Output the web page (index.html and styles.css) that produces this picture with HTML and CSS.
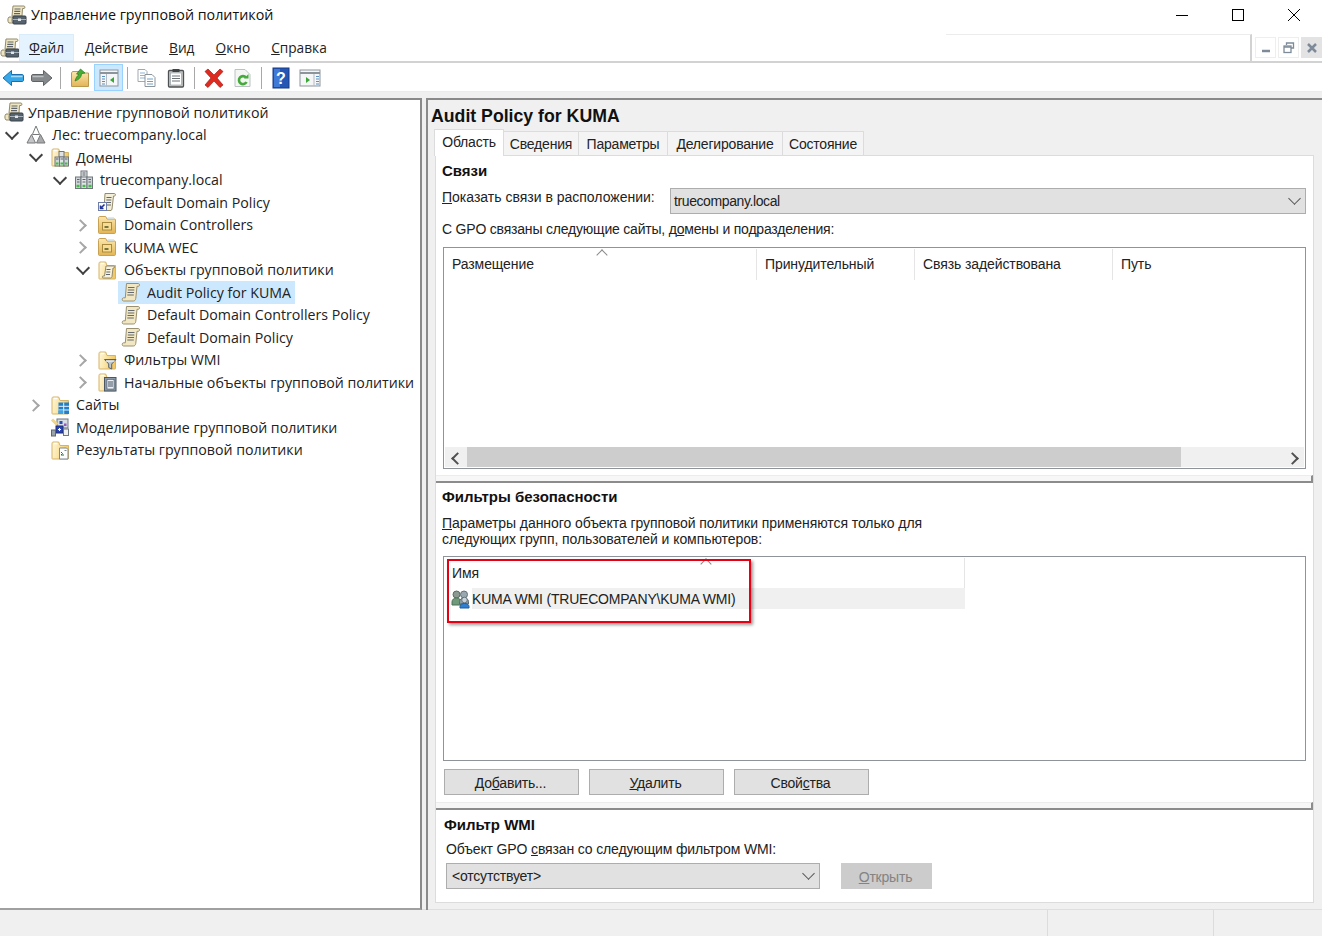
FILE: index.html
```html
<!DOCTYPE html>
<html lang="ru">
<head>
  <meta charset="utf-8">
  <title>Управление групповой политикой</title>
  <link rel="stylesheet" href="styles.css">
</head>
<body>
  <svg class="sprite" width="0" height="0">
    <defs>
      <linearGradient id="g-folder" x1="0" y1="0" x2="1" y2="0.2">
        <stop offset="0" stop-color="#fff7dc"/>
        <stop offset="0.45" stop-color="#fbe6a8"/>
        <stop offset="1" stop-color="#f2c964"/>
      </linearGradient>
      <linearGradient id="g-closed" x1="0" y1="0" x2="0" y2="1">
        <stop offset="0" stop-color="#fbe7ae"/>
        <stop offset="1" stop-color="#e3b455"/>
      </linearGradient>
      <symbol id="i-scroll" viewBox="0 0 20 20">
        <path d="M5.500 1.500h12c1.300 0 1.300 2.800 0 2.800H16l-1.200 12c-.2 1.600-1 2.700-2.500 2.700H2.500c-1.700 0-1.700-3.200 0-3.200h1.800z" fill="#f1e7c3" stroke="#9a9070"/>
        <path d="M7 5.500h6.500M6.800 8h6.500M6.500 10.500h6.500M6.300 13h6.500" stroke="#666a6c" stroke-width="1.200"/>
      </symbol>
      <symbol id="i-gpmc" viewBox="0 0 20 20">
        <path d="M6 1h11c1.200 0 1.200 2.500 0 2.500h-1.500L15 11H5z" fill="#efe6c4" stroke="#938a6c"/>
        <path d="M7.500 4h6M7.300 6.300h6M7 8.600h6" stroke="#5f6468" stroke-width="1.200"/>
        <path d="M2 12h4c-1.500 1-1.500 5 0 6H2c-1.500-1-1.500-5 0-6z" fill="#efe6c4" stroke="#938a6c"/>
        <rect x="6" y="11" width="13" height="8" rx="1" fill="#56626d" stroke="#3a434b"/>
        <path d="M6 14.500h13" stroke="#a9b3bb"/>
        <rect x="11" y="13.500" width="3" height="2.500" fill="#dfe5ea"/>
      </symbol>
      <symbol id="i-forest" viewBox="0 0 20 20">
        <path d="M10 1l3.600 8.500H6.400z" fill="#fff" stroke="#77797b"/>
        <path d="M5.500 9.500l4 8.500H1z" fill="#c4c6c8" stroke="#77797b"/>
        <path d="M14.500 9.500l4.500 8.500h-8.500z" fill="#a8aaac" stroke="#77797b"/>
      </symbol>
      <symbol id="i-folder" viewBox="0 0 20 20">
        <path d="M2 4v14.500c0 .3.200.5.500.5h15.500c.300 0 .5-.2.500-.5V5.500H10L8.700 2H3C2.400 2 2 2.800 2 4z" fill="url(#g-folder)" stroke="#d5b367"/>
        <path d="M4 3.500h3.500" stroke="#fff" stroke-width="1.500"/>
      </symbol>
      <symbol id="i-ou" viewBox="0 0 20 20">
        <path d="M1.500 3.500v14c0 .5.300 1 1 1h15c.6 0 1-.5 1-1V5c0-.6-.4-1-1-1H10L8.700 1.500H2.500c-.6 0-1 .8-1 2z" fill="url(#g-closed)" stroke="#c9a153"/>
        <path d="M10.500 3h6.500" stroke="#cfe3f2" stroke-width="1.500"/>
        <rect x="5.500" y="7.500" width="9" height="7.500" fill="#f6dc94" stroke="#a98a3c"/>
        <path d="M7.500 12h4" stroke="#5c5a20" stroke-width="1.600"/>
      </symbol>
      <symbol id="i-tower" viewBox="0 0 20 20">
        <rect x="7" y="1" width="6" height="6.500" fill="#dfe3e6" stroke="#6f777d"/>
        <rect x="1.500" y="7" width="5.500" height="11.500" fill="#cfd4d8" stroke="#6f777d"/>
        <rect x="7" y="7" width="6" height="11.500" fill="#e3e6e9" stroke="#6f777d"/>
        <rect x="13" y="7" width="5.500" height="11.500" fill="#cfd4d8" stroke="#6f777d"/>
        <path d="M8.500 3h3M8.500 5h3M3 9.500h2.500M8.500 9.500h3M14.500 9.500h2.500M3 12h2.500M8.500 12h3M14.500 12h2.500" stroke="#5d656b"/>
        <path d="M2.500 16h3M8.500 16h3M14.500 16h3" stroke="#3fbe3f" stroke-width="2.400"/>
      </symbol>
      <symbol id="i-domains" viewBox="0 0 20 20">
        <use href="#i-folder"/>
        <rect x="9" y="4.500" width="5" height="5.500" fill="#dfe3e6" stroke="#6f777d"/>
        <rect x="5" y="10" width="4.500" height="9" fill="#cfd4d8" stroke="#6f777d"/>
        <rect x="9.500" y="10" width="4.500" height="9" fill="#e3e6e9" stroke="#6f777d"/>
        <rect x="14" y="10" width="4.500" height="9" fill="#cfd4d8" stroke="#6f777d"/>
        <path d="M6 12h2.500M10.500 12h2.500M15 12h2.500" stroke="#5d656b"/>
        <path d="M6 16.500h2.500M10.500 16.500h2.500M15 16.500h2.500" stroke="#3fbe3f" stroke-width="2.200"/>
      </symbol>
      <symbol id="i-link" viewBox="0 0 20 20">
        <path d="M8 1.500h9.500c1.200 0 1.200 2.500 0 2.500H16.500l-1.500 13c-.1.700-.5 1.500-1 1.500H7z" fill="#f4efd9" stroke="#938a6c"/>
        <path d="M9.500 5.500h5M9.300 8h5M9 10.500h5M9 13h5" stroke="#5f6468" stroke-width="1.200"/>
        <rect x="1.500" y="10.500" width="8" height="8" fill="#fff" stroke="#6f7ea8"/>
        <path d="M7.500 12.500L3.500 16.500M3.500 13.500v3h3" stroke="#22349a" stroke-width="1.600" fill="none"/>
      </symbol>
      <symbol id="i-gpos" viewBox="0 0 20 20">
        <use href="#i-folder"/>
        <path d="M9 6h8c.8 0 .8 2 0 2h-1l-1 8.500c-.1.800-.6 1.500-1.500 1.500H6c-.9 0-.9-2 0-2h1.500z" fill="#f7f2de" stroke="#938a6c"/>
        <path d="M9.500 9.500h4M9.300 12h4M9 14.500h4" stroke="#5f6468"/>
      </symbol>
      <symbol id="i-filter" viewBox="0 0 20 20">
        <use href="#i-folder"/>
        <path d="M7.500 9.500h11.500L14.700 14v5l-3-1.500V14z" fill="#bfc6cc" stroke="#59636c"/>
        <path d="M9 11.200h8.500" stroke="#f2f4f5"/>
      </symbol>
      <symbol id="i-starter" viewBox="0 0 20 20">
        <use href="#i-folder"/>
        <rect x="7.500" y="5.500" width="11.500" height="13.500" fill="#8b99a8" stroke="#4b5763"/>
        <rect x="10" y="7.500" width="7" height="9.500" fill="#eef1f4" stroke="#4b5763" stroke-width=".6"/>
        <path d="M11 10h5M11 12h5M11 14h5" stroke="#3d4d5c"/>
      </symbol>
      <symbol id="i-sites" viewBox="0 0 20 20">
        <use href="#i-folder"/>
        <rect x="8.500" y="7.500" width="10.500" height="11.500" fill="#1f7fc9"/>
        <path d="M8.500 11.300h10.500M8.500 15h10.500M13.700 7.500V19" stroke="#e8f3fb"/>
        <rect x="8.500" y="15.500" width="4.700" height="3.500" fill="#3aa4e6"/>
      </symbol>
      <symbol id="i-model" viewBox="0 0 20 20">
        <rect x="7" y="2" width="11" height="9" fill="#d7dde3" stroke="#6e7880"/>
        <rect x="9.500" y="4" width="3" height="3" fill="#2b4fb0"/>
        <rect x="14" y="6.500" width="2.500" height="2.500" fill="#8f5bb5"/>
        <rect x="6" y="9" width="7" height="7" fill="#2a45b0" stroke="#1d2d78"/>
        <path d="M8 12.500h3M9.500 11v3" stroke="#fff"/>
        <rect x="1.500" y="13" width="4" height="6" fill="#9aa3aa" stroke="#5f676d"/>
        <path d="M2 2.500l5 5" stroke="#f0d48a" stroke-width="3"/>
        <rect x="13.500" y="12" width="5" height="6.500" fill="#eef0f2" stroke="#6e7880"/>
      </symbol>
      <symbol id="i-results" viewBox="0 0 20 20">
        <use href="#i-folder"/>
        <path d="M9.500 8h7l1.500 1.500V19H9.500z" fill="#fdfdfd" stroke="#7f8890"/>
        <path d="M11 12l1.500 1.500L11 15h3" stroke="#27753a" fill="none"/>
        <path d="M14.500 10.500h2" stroke="#7f8890"/>
      </symbol>
      <symbol id="i-group" viewBox="0 0 20 20">
        <circle cx="5.500" cy="5.500" r="3.500" fill="#8a9a90" stroke="#5c6a62"/>
        <path d="M1 16v-3c0-2.500 2-4 4.500-4S10 10.500 10 13v3z" fill="#6f9a7a" stroke="#4d6f56"/>
        <circle cx="13" cy="5.500" r="3.500" fill="#9ba7ae" stroke="#64727a"/>
        <path d="M8.500 15v-2.500C8.500 10.500 10.500 9 13 9s4.500 1.500 4.500 3.500V15z" fill="#8b9ca6" stroke="#5b6b74"/>
        <circle cx="13.500" cy="11" r="2.800" fill="#c9d2d8" stroke="#66757e"/>
        <path d="M9 19v-1.500c0-1.800 2-3 4.500-3s4.500 1.200 4.500 3V19z" fill="#2f7fd1" stroke="#1f5c9e"/>
      </symbol>
    </defs>
  </svg>

  <header class="titlebar">
    <svg class="title-icon"><use href="#i-gpmc"/></svg>
    <span class="title-text">Управление групповой политикой</span>
    <div class="win-buttons">
      <button class="win-btn"><svg width="14" height="14" viewBox="0 0 14 14"><path d="M1 7.500h12" stroke="#000"/></svg></button>
      <button class="win-btn"><svg width="14" height="14" viewBox="0 0 14 14"><rect x="1.500" y="1.500" width="11" height="11" fill="none" stroke="#000"/></svg></button>
      <button class="win-btn"><svg width="14" height="14" viewBox="0 0 14 14"><path d="M1 1l12 12M13 1L1 13" stroke="#000"/></svg></button>
    </div>
  </header>

  <nav class="menubar">
    <svg class="menu-icon"><use href="#i-gpmc"/></svg>
    <span class="menu-item active"><u>Ф</u>айл</span>
    <span class="menu-item"><u>Д</u>ействие</span>
    <span class="menu-item"><u>В</u>ид</span>
    <span class="menu-item"><u>О</u>кно</span>
    <span class="menu-item"><u>С</u>правка</span>
    <div class="mdi-strip"></div>
    <div class="mdi-buttons">
      <span class="mdi-btn"><svg width="12" height="12" viewBox="0 0 12 12"><path d="M2 9h8" stroke="#7d8a99" stroke-width="2.500"/></svg></span>
      <span class="mdi-btn"><svg width="12" height="12" viewBox="0 0 12 12"><path d="M3.500 3V1h7v5H8" fill="none" stroke="#7d8a99" stroke-width="1.300"/><rect x="1" y="4" width="7" height="6.500" fill="none" stroke="#7d8a99" stroke-width="1.300"/><path d="M1 5h7" stroke="#7d8a99" stroke-width="1.500"/></svg></span>
      <span class="mdi-btn closing"><svg width="12" height="12" viewBox="0 0 12 12"><path d="M2 2l8 8M10 2l-8 8" stroke="#7d8a99" stroke-width="2.500"/></svg></span>
    </div>
  </nav>

  <div class="toolbar">
    <span class="tool"><svg width="22" height="20" viewBox="0 0 22 20"><path d="M1 10l8.500-7.500V6.500h10.500c1 0 1.500.5 1.500 1.500v4c0 1-.5 1.500-1.500 1.500H9.500v4z" fill="#37a7e8" stroke="#1c6fae"/><path d="M9 8.500h11.500" stroke="#a5dcf7" stroke-width="1.500"/></svg></span>
    <span class="tool"><svg width="22" height="20" viewBox="0 0 22 20"><path d="M21 10l-8.500-7.500V6.500H2c-1 0-1.500.5-1.500 1.500v4c0 1 .5 1.500 1.500 1.500h10.500v4z" fill="#85898c" stroke="#5f6366"/><path d="M1.500 8.500h11" stroke="#bcc0c2" stroke-width="1.500"/></svg></span>
    <span class="tool-sep"></span>
    <span class="tool"><svg width="20" height="20" viewBox="0 0 20 20"><path d="M1.500 5v13.500h17V5H10L9 3.500H2.500z" fill="url(#g-closed)" stroke="#b99a4c"/><path d="M5 13c1-3.500 2-5 4-6.500L6.500 6 10.500 1 15 5l-3.200 0.500c-.5 3-2 6-6.800 7.500z" fill="#45ad33" stroke="#2a7d22" stroke-width=".7"/></svg></span>
    <span class="tool selected"><svg width="20" height="20" viewBox="0 0 20 20"><rect x="1" y="2" width="18" height="16" fill="#f4f6f8" stroke="#8d959c"/><path d="M1 5h18" stroke="#8d959c" stroke-width="2"/><path d="M7.500 6v12" stroke="#b5bcc2"/><path d="M3 8.500h3M3 11h3M3 13.500h3M3 16h3" stroke="#5a8fc0"/><path d="M15 9v6l-4-3z" fill="#3aa636"/></svg></span>
    <span class="tool-sep"></span>
    <span class="tool"><svg width="21" height="20" viewBox="0 0 21 20"><path d="M2 1.500h7l2 2v10H2z" fill="#fff" stroke="#a3a9ae"/><path d="M4 5h5M4 7.500h5M4 10h5" stroke="#8fb5d6"/><path d="M9 6.500h7l3 3v9H9z" fill="#fff" stroke="#8d959c"/><path d="M11 11h6M11 13.500h6M11 16h6" stroke="#6ea0c9"/></svg></span>
    <span class="tool"><svg width="18" height="20" viewBox="0 0 18 20"><rect x="1.500" y="2.500" width="15" height="16.500" rx="1" fill="#c9cac7" stroke="#4e5153" stroke-width="1.300"/><rect x="3.500" y="5" width="11" height="12" fill="#fff" stroke="#8d959c" stroke-width=".6"/><rect x="5.500" y="1" width="7" height="3" fill="#3f4447"/><path d="M5 8h8M5 10.500h8M5 13h8" stroke="#6d7276"/></svg></span>
    <span class="tool-sep"></span>
    <span class="tool"><svg width="22" height="20" viewBox="0 0 22 20"><path d="M2 3.500L5 1l6 6 6-6 3 2.500L14 10l6 7-3 2.500-6-6.500-6 6.500L2 17l6-7z" fill="#df2a20" stroke="#a81b14" stroke-width=".7"/></svg></span>
    <span class="tool"><svg width="19" height="20" viewBox="0 0 19 20"><path d="M2 1.500h10l5 5v12H2z" fill="#f3f6f3" stroke="#bcc2c4"/><path d="M13 9.500A4 4 0 1 0 13.500 14" fill="none" stroke="#44aa3a" stroke-width="2.600"/><path d="M11 10.500h4.500V6z" fill="#44aa3a"/></svg></span>
    <span class="tool-sep"></span>
    <span class="tool"><svg width="18" height="22" viewBox="0 0 18 22"><rect x="1" y="1" width="16" height="20" fill="#2456b5" stroke="#163a85"/><rect x="2" y="2" width="6" height="18" fill="#3f7ad6"/><text x="9" y="16.500" class="help-mark">?</text></svg></span>
    <span class="tool"><svg width="22" height="20" viewBox="0 0 22 20"><rect x="1" y="2" width="20" height="16" fill="#f4f6f8" stroke="#8d959c"/><path d="M1 5h20" stroke="#8d959c" stroke-width="2"/><path d="M15 6v12" stroke="#b5bcc2"/><path d="M17 8.500h3M17 11h3M17 13.500h3M17 16h3" stroke="#5a8fc0"/><path d="M7 9v6l4-3z" fill="#3aa636"/></svg></span>
  </div>
  <div class="toolbar-strip"></div>

  <main class="workspace">
    <aside class="tree">
      <div class="row lvl0"><span class="node"><svg class="tree-icon root-icon"><use href="#i-gpmc"/></svg>Управление групповой политикой</span></div>
      <div class="row lvl1"><span class="chev open"></span><span class="node"><svg class="tree-icon"><use href="#i-forest"/></svg>Лес: truecompany.local</span></div>
      <div class="row lvl2"><span class="chev open"></span><span class="node"><svg class="tree-icon"><use href="#i-domains"/></svg>Домены</span></div>
      <div class="row lvl3"><span class="chev open"></span><span class="node"><svg class="tree-icon"><use href="#i-tower"/></svg>truecompany.local</span></div>
      <div class="row lvl4"><span class="chev none"></span><span class="node"><svg class="tree-icon"><use href="#i-link"/></svg>Default Domain Policy</span></div>
      <div class="row lvl4"><span class="chev"></span><span class="node"><svg class="tree-icon"><use href="#i-ou"/></svg>Domain Controllers</span></div>
      <div class="row lvl4"><span class="chev"></span><span class="node"><svg class="tree-icon"><use href="#i-ou"/></svg>KUMA WEC</span></div>
      <div class="row lvl4"><span class="chev open"></span><span class="node"><svg class="tree-icon"><use href="#i-gpos"/></svg>Объекты групповой политики</span></div>
      <div class="row lvl5"><span class="chev none"></span><span class="node current"><svg class="tree-icon"><use href="#i-scroll"/></svg>Audit Policy for KUMA</span></div>
      <div class="row lvl5"><span class="chev none"></span><span class="node"><svg class="tree-icon"><use href="#i-scroll"/></svg>Default Domain Controllers Policy</span></div>
      <div class="row lvl5"><span class="chev none"></span><span class="node"><svg class="tree-icon"><use href="#i-scroll"/></svg>Default Domain Policy</span></div>
      <div class="row lvl4"><span class="chev"></span><span class="node"><svg class="tree-icon"><use href="#i-filter"/></svg>Фильтры WMI</span></div>
      <div class="row lvl4"><span class="chev"></span><span class="node"><svg class="tree-icon"><use href="#i-starter"/></svg>Начальные объекты групповой политики</span></div>
      <div class="row lvl2"><span class="chev"></span><span class="node"><svg class="tree-icon"><use href="#i-sites"/></svg>Сайты</span></div>
      <div class="row lvl2"><span class="chev none"></span><span class="node"><svg class="tree-icon"><use href="#i-model"/></svg>Моделирование групповой политики</span></div>
      <div class="row lvl2"><span class="chev none"></span><span class="node"><svg class="tree-icon"><use href="#i-results"/></svg>Результаты групповой политики</span></div>
    </aside>

    <section class="details">
      <h1 class="gpo-name">Audit Policy for KUMA</h1>
      <div class="tabs">
        <span class="tab tab-active">Область</span>
        <span class="tab tab-info">Сведения</span>
        <span class="tab tab-params">Параметры</span>
        <span class="tab tab-deleg">Делегирование</span>
        <span class="tab tab-state">Состояние</span>
      </div>

      <div class="panel">
        <div class="block links">
          <h2 class="block-title">Связи</h2>
          <div class="location">
            <label class="location-label"><u>П</u>оказать связи в расположении:</label>
            <div class="combo combo-wide"><span class="combo-text">truecompany.local</span><span class="combo-arrow"></span></div>
          </div>
          <p class="caption">С GPO связаны следующие сайты, д<u>о</u>мены и подразделения:</p>
          <div class="listview links-list">
            <div class="list-head">
              <span class="col col-place">Размещение<span class="sort-caret"></span></span>
              <span class="col col-force">Принудительный</span>
              <span class="col col-enabled">Связь задействована</span>
              <span class="col col-path">Путь</span>
            </div>
            <div class="list-body"></div>
            <div class="hscroll">
              <span class="scroll-arrow left"></span>
              <span class="scroll-thumb"></span>
              <span class="scroll-arrow right"></span>
            </div>
          </div>
        </div>

        <div class="splitter"></div>

        <div class="block filters">
          <h2 class="block-title">Фильтры безопасности</h2>
          <p class="filters-note"><u>П</u>араметры данного объекта групповой политики применяются только для<br>следующих групп, пользователей и компьютеров:</p>
          <div class="listview filters-list">
            <div class="list-head short">
              <span class="col col-name">Имя<span class="sort-caret second"></span></span>
            </div>
            <div class="filter-row">
              <svg class="group-icon"><use href="#i-group"/></svg>
              <span class="filter-cell">KUMA WMI (TRUECOMPANY\KUMA WMI)</span>
            </div>
            <div class="callout"></div>
          </div>
          <div class="filter-buttons">
            <button class="btn">До<u>б</u>авить...</button>
            <button class="btn"><u>У</u>далить</button>
            <button class="btn">Свой<u>с</u>тва</button>
          </div>
        </div>

        <div class="splitter second-split"></div>

        <div class="block wmi">
          <h2 class="block-title">Фильтр WMI</h2>
          <p class="wmi-note">Объект GPO <u>с</u>вязан со следующим фильтром WMI:</p>
          <div class="wmi-row">
            <div class="combo combo-wmi"><span class="combo-text-wmi">&lt;отсутствует&gt;</span><span class="combo-arrow"></span></div>
            <button class="btn btn-off"><u>О</u>ткрыть</button>
          </div>
        </div>
      </div>
    </section>
  </main>

  <footer class="statusbar">
    <span class="status-cell status-main"></span>
    <span class="status-cell status-mid"></span>
    <span class="status-cell status-end"></span>
  </footer>
</body>
</html>
```
FILE: styles.css
```css
* {
  box-sizing: border-box;
}

html, body {
  margin: 0;
  height: 936px;
  overflow: hidden;
}

body {
  background-color: #fff;
  color: #222;
  font-family: "Open Sans", "Noto Sans", sans-serif;
  font-size: 14px;
}

.sprite {
  position: absolute;
}

/* Заголовок окна */
.titlebar {
  height: 30px;
  display: flex;
  align-items: center;
  padding-left: 7px;
}

.title-icon {
  width: 20px;
  height: 20px;
}

.title-text {
  margin-left: 4px;
  margin-top: -2px;
  font-size: 14.3px;
  color: #111;
}

.win-buttons {
  margin-left: auto;
  display: flex;
}

.win-btn {
  width: 56px;
  height: 30px;
  padding: 0;
  border: none;
  background: none;
  display: flex;
  align-items: center;
  justify-content: center;
}

/* Меню */
.menubar {
  margin-top: 4px;
  height: 29px;
  display: flex;
  align-items: stretch;
  border-bottom: 2px solid #d2d2d2;
}

.menu-icon {
  width: 20px;
  height: 20px;
  margin: 4px 0 0 0;
  flex: none;
}

.menu-item {
  display: flex;
  align-items: center;
  padding: 0 9px;
  font-size: 13.7px;
  height: 27px;
  margin-right: 1px;
  border: 1px solid transparent;
}

.menu-item.active {
  margin-left: -1px;
  background-color: #e5f3ff;
  border-color: #d8ecfc;
}

.mdi-strip {
  margin-left: auto;
  width: 306px;
  border-top: 1px solid #ececec;
  border-right: 2px solid #d2d2d2;
}

.mdi-buttons {
  display: flex;
  gap: 2px;
  padding: 3px 0 0 3px;
}

.mdi-btn {
  width: 21px;
  height: 21px;
  border: 1px solid #eee;
  display: flex;
  align-items: center;
  justify-content: center;
}

.mdi-btn.closing {
  background-color: #e3e3e3;
  border-color: #e3e3e3;
}

/* Панель инструментов */
.toolbar {
  height: 28px;
  margin-left: -2px;
  padding-top: 1px;
  display: flex;
  align-items: center;
}

.tool {
  width: 29px;
  height: 27px;
  display: flex;
  align-items: center;
  justify-content: center;
  border: 1px solid transparent;
}

.tool.selected {
  background-color: #cce8ff;
  border-color: #99d1ff;
}

.tool-sep {
  width: 9px;
  height: 22px;
  background: linear-gradient(#a8a8a8, #a8a8a8) center / 1px 100% no-repeat;
}

.help-mark {
  font-family: "Liberation Sans", sans-serif;
  font-weight: bold;
  font-size: 16px;
  fill: #fff;
  text-anchor: middle;
}

.toolbar-strip {
  height: 7px;
  background-color: #f0f0f0;
  border-top: 1px solid #ececec;
}

/* Основная область */
.workspace {
  height: 812px;
  display: flex;
  background-color: #f0f0f0;
}

.tree {
  width: 422px;
  flex: none;
  padding-top: 1px;
  background-color: #fff;
  border-top: 2px solid #8a8a8a;
  border-right: 2px solid #8a8a8a;
  border-bottom: 2px solid #a0a0a0;
  font-size: 14.2px;
}

.row {
  height: 22.5px;
  display: flex;
  align-items: center;
  white-space: nowrap;
}

.lvl0 { padding-left: 4px; }
.lvl1 { padding-left: 4px; }
.lvl2 { padding-left: 28px; }
.lvl3 { padding-left: 52px; }
.lvl4 { padding-left: 75px; }
.lvl5 { padding-left: 99px; }

.chev {
  width: 20px;
  height: 20px;
  flex: none;
  margin-right: 2px;
  position: relative;
}

.chev::before {
  content: "";
  position: absolute;
  left: 1px;
  top: 6px;
  width: 7px;
  height: 7px;
  border-right: 2px solid #a6a6a6;
  border-top: 2px solid #a6a6a6;
  transform: rotate(45deg);
}

.chev.open::before {
  left: 3px;
  top: 3px;
  width: 8px;
  height: 8px;
  border-color: #404040;
  transform: rotate(135deg);
}

.chev.none::before {
  display: none;
}

.node {
  display: flex;
  align-items: center;
  height: 22.5px;
  padding-right: 4px;
}

.node.current {
  background-color: #cce8ff;
  margin-left: -3px;
  padding-left: 3px;
}

.tree-icon {
  width: 20px;
  height: 20px;
  margin-right: 6px;
  flex: none;
}

.tree-icon.root-icon {
  margin-right: 4px;
}

.lvl4 .tree-icon {
  margin-right: 7px;
}

/* Правая панель */
.details {
  margin-left: 4px;
  flex: 1;
  min-width: 0;
  border-top: 2px solid #8a8a8a;
  border-left: 2px solid #8a8a8a;
  font-family: "Liberation Sans", sans-serif;
  font-size: 14px;
  letter-spacing: -0.2px;
}

.gpo-name {
  margin: 0;
  height: 28px;
  padding-left: 3px;
  font-size: 17.7px;
  line-height: 32px;
  letter-spacing: 0;
  color: #111;
}

.tabs {
  display: flex;
  height: 27px;
  padding-left: 6px;
  align-items: flex-end;
}

.tab {
  height: 24px;
  display: flex;
  align-items: center;
  justify-content: center;
  background-color: #f4f4f4;
  border: 1px solid #dcdcdc;
  border-left: none;
  border-bottom: none;
}

.tab-active {
  height: 27px;
  width: 70px;
  padding-bottom: 2px;
  background-color: #fff;
  border-left: 1px solid #dcdcdc;
  position: relative;
  top: 1px;
}

.tab-info { width: 75px; }
.tab-params { width: 89px; }
.tab-deleg { width: 115px; }
.tab-state { width: 81px; }

.panel {
  margin: 0 8px 0 7px;
  height: 748px;
  background-color: #fff;
  border: 1px solid #dcdcdc;
}

.block {
  padding-left: 6px;
}

.block-title {
  margin: 0;
  font-size: 15px;
  line-height: 18px;
  letter-spacing: 0;
  color: #111;
}

.links {
  padding-top: 6px;
}

.location {
  margin-top: 8px;
  display: flex;
  align-items: flex-start;
  height: 26px;
}

.location-label {
  width: 228px;
  line-height: 18px;
  letter-spacing: 0;
}

.combo {
  height: 26px;
  display: flex;
  align-items: center;
  padding-left: 3px;
  background-color: #e1e1e1;
  border: 1px solid #adadad;
  position: relative;
}

.combo-text {
  letter-spacing: -0.4px;
}

.combo-text-wmi {
  margin-left: 2px;
}

.combo-wide {
  width: 636px;
}

.combo-wmi {
  width: 374px;
}

.combo-arrow {
  position: absolute;
  right: 6px;
  top: 5px;
  width: 9px;
  height: 9px;
  border-right: 1.500px solid #555;
  border-bottom: 1.500px solid #555;
  transform: rotate(45deg);
}

.caption {
  margin: 6px 0 0;
  line-height: 18px;
}

.listview {
  margin-left: 1px;
  width: 863px;
  background-color: #fff;
  border: 1px solid #8f949a;
  position: relative;
}

.links-list {
  margin-top: 9px;
  height: 222px;
  display: flex;
  flex-direction: column;
}

.list-head {
  height: 32px;
  display: flex;
  flex: none;
}

.list-head.short {
  height: 31px;
}

.col {
  display: flex;
  align-items: center;
  padding: 0 0 1px 8px;
  margin-top: 1px;
  letter-spacing: -0.1px;
  border-right: 1px solid #e5e5e5;
  position: relative;
}

.col-place { width: 313px; }
.col-force { width: 158px; }
.col-enabled { width: 198px; }
.col-path { border-right: none; }
.col-name { width: 521px; }

.sort-caret {
  position: absolute;
  left: 154px;
  top: 2px;
  width: 8px;
  height: 8px;
  border-left: 1.500px solid #8a8a8a;
  border-top: 1.500px solid #8a8a8a;
  transform: rotate(45deg);
}

.sort-caret.second {
  left: 258px;
}

.list-body {
  flex: 1;
}

.hscroll {
  height: 20px;
  margin: 0 1px 1px;
  display: flex;
  align-items: stretch;
  background-color: #f0f0f0;
}

.scroll-arrow {
  width: 22px;
  flex: none;
  position: relative;
}

.scroll-arrow::before {
  content: "";
  position: absolute;
  top: 7px;
  left: 8px;
  width: 7px;
  height: 7px;
  border-left: 2px solid #505050;
  border-top: 2px solid #505050;
  transform: rotate(-45deg);
}

.scroll-arrow.right {
  margin-left: auto;
}

.scroll-arrow.right::before {
  transform: rotate(135deg);
  left: 6px;
}

.scroll-thumb {
  width: 714px;
  background-color: #cdcdcd;
}

.splitter {
  margin-top: 6px;
  height: 8px;
  background-color: #f7f7f7;
  border-top: 1px solid #ececec;
  border-bottom: 2px solid #8c8c8c;
  border-right: 2px solid #8c8c8c;
}

.second-split {
  margin-top: 7px;
}

.filters {
  padding-top: 5px;
}

.filters-note {
  margin: 9px 0 0;
  line-height: 16px;
  letter-spacing: -0.07px;
}

.filters-list {
  margin-top: 9px;
  height: 205px;
}

.filter-row {
  display: flex;
  align-items: center;
  height: 21px;
  padding-left: 7px;
}

.group-icon {
  width: 20px;
  height: 20px;
  flex: none;
}

.filter-cell {
  margin-left: 1px;
  width: 493px;
  height: 21px;
  display: flex;
  align-items: center;
  background-color: #f0f0f0;
}

/* Красная рамка поверх списка */
.callout {
  position: absolute;
  left: 3px;
  top: 2px;
  width: 304px;
  height: 64px;
  border: 2px solid #e60012;
  box-shadow: 2px 2px 3px rgba(0, 0, 0, 0.4);
}

.filter-buttons {
  margin: 8px 0 0 2px;
  display: flex;
  gap: 10px;
}

.btn {
  width: 135px;
  height: 26px;
  padding: 1px 2px 0 0;
  background-color: #e1e1e1;
  border: 1px solid #adadad;
  font-family: inherit;
  font-size: 14px;
  letter-spacing: -0.2px;
  color: #222;
}

.wmi {
  padding: 6px 0 0 8px;
}

.wmi-note {
  margin: 6px 0 0 2px;
  line-height: 18px;
  letter-spacing: -0.14px;
}

.wmi-row {
  margin: 5px 0 0 2px;
  display: flex;
  gap: 21px;
}

.btn-off {
  width: 91px;
  background-color: #cccccc;
  border-color: #cccccc;
  color: #838383;
}

/* Строка состояния */
.statusbar {
  height: 27px;
  margin-top: -1px;
  display: flex;
  background-color: #f0f0f0;
  border-top: 1px solid #dedede;
}

.status-cell {
  border-right: 1px solid #dcdcdc;
}

.status-main { width: 1048px; }
.status-mid { width: 166px; }
.status-end { flex: 1; border-right: none; }
```
